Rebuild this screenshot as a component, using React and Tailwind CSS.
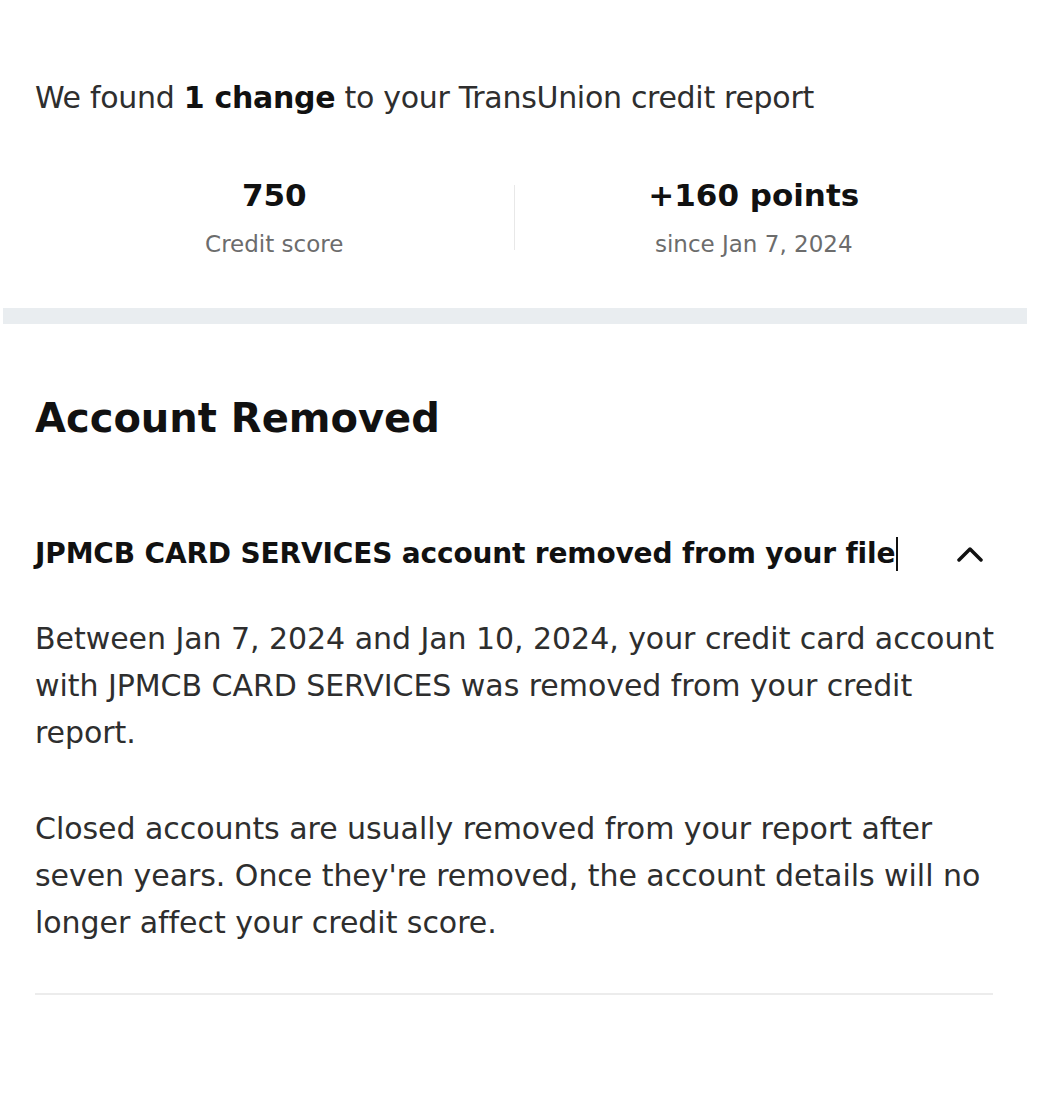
const font = { fontFamily: '"DejaVu Sans", "Noto Sans", sans-serif' };

function Stat({ value, label }) {
  return (
    <div className="flex-1 flex flex-col items-center">
      <div className="text-[31px] leading-[38px] font-bold text-[#111]">{value}</div>
      <div className="text-[23px] leading-[30px] text-[#6c6c6c] mt-[15px]">{label}</div>
    </div>
  );
}

function Caret() {
  return (
    <svg width="26" height="16" viewBox="0 0 26 16" className="mr-[10px] text-[#111]">
      <path d="M2 14 L13 3 L24 14" fill="none" stroke="currentColor" strokeWidth="3.5" strokeLinecap="round" strokeLinejoin="round" />
    </svg>
  );
}

export default function App() {
  return (
    <div className="w-[1056px] min-h-[1096px] bg-white text-[#2e2e2e]" style={font}>
      <div className="w-[1024px] ml-[3px]">
        {/* summary */}
        <div className="px-[32px] pt-[78px] pb-[49px]">
          <p className="text-[30px] leading-[40px] tracking-[-0.3px]">
            We found <span className="font-bold text-[#111]">1 change</span> to your TransUnion credit report
          </p>
          <div className="flex items-center mt-[58px] w-[958px]">
            <Stat value="750" label="Credit score" />
            <div className="w-px h-[65px] bg-[#e8e8e8]" />
            <Stat value="+160 points" label="since Jan 7, 2024" />
          </div>
        </div>
        <div className="h-[16px] bg-[#e9edf0]" />

        {/* details */}
        <div className="px-[32px] pt-[70px]">
          <h2 className="text-[40px] leading-[48px] font-bold text-[#111]">Account Removed</h2>

          <div className="mt-[94px]">
            <div className="flex items-center justify-between w-[958px]">
              <h3 className="text-[28px] leading-[36px] font-bold text-[#111] tracking-[-0.15px] flex items-center">
                JPMCB CARD SERVICES account removed from your file
                <span className="inline-block w-[2px] h-[34px] bg-[#111] ml-[1px]" />
              </h3>
              <Caret />
            </div>
            <div className="w-[980px] mt-[43px] text-[30px] leading-[47px] tracking-[-0.05px] space-y-[49px]">
              <p>Between Jan 7, 2024 and Jan 10, 2024, your credit card account with JPMCB CARD SERVICES was removed from your credit report.</p>
              <p>Closed accounts are usually removed from your report after seven years. Once they're removed, the account details will no longer affect your credit score.</p>
            </div>
            <div className="w-[958px] mt-[47px] border-b-2 border-[#ececec]" />
          </div>
        </div>
      </div>
    </div>
  );
}
